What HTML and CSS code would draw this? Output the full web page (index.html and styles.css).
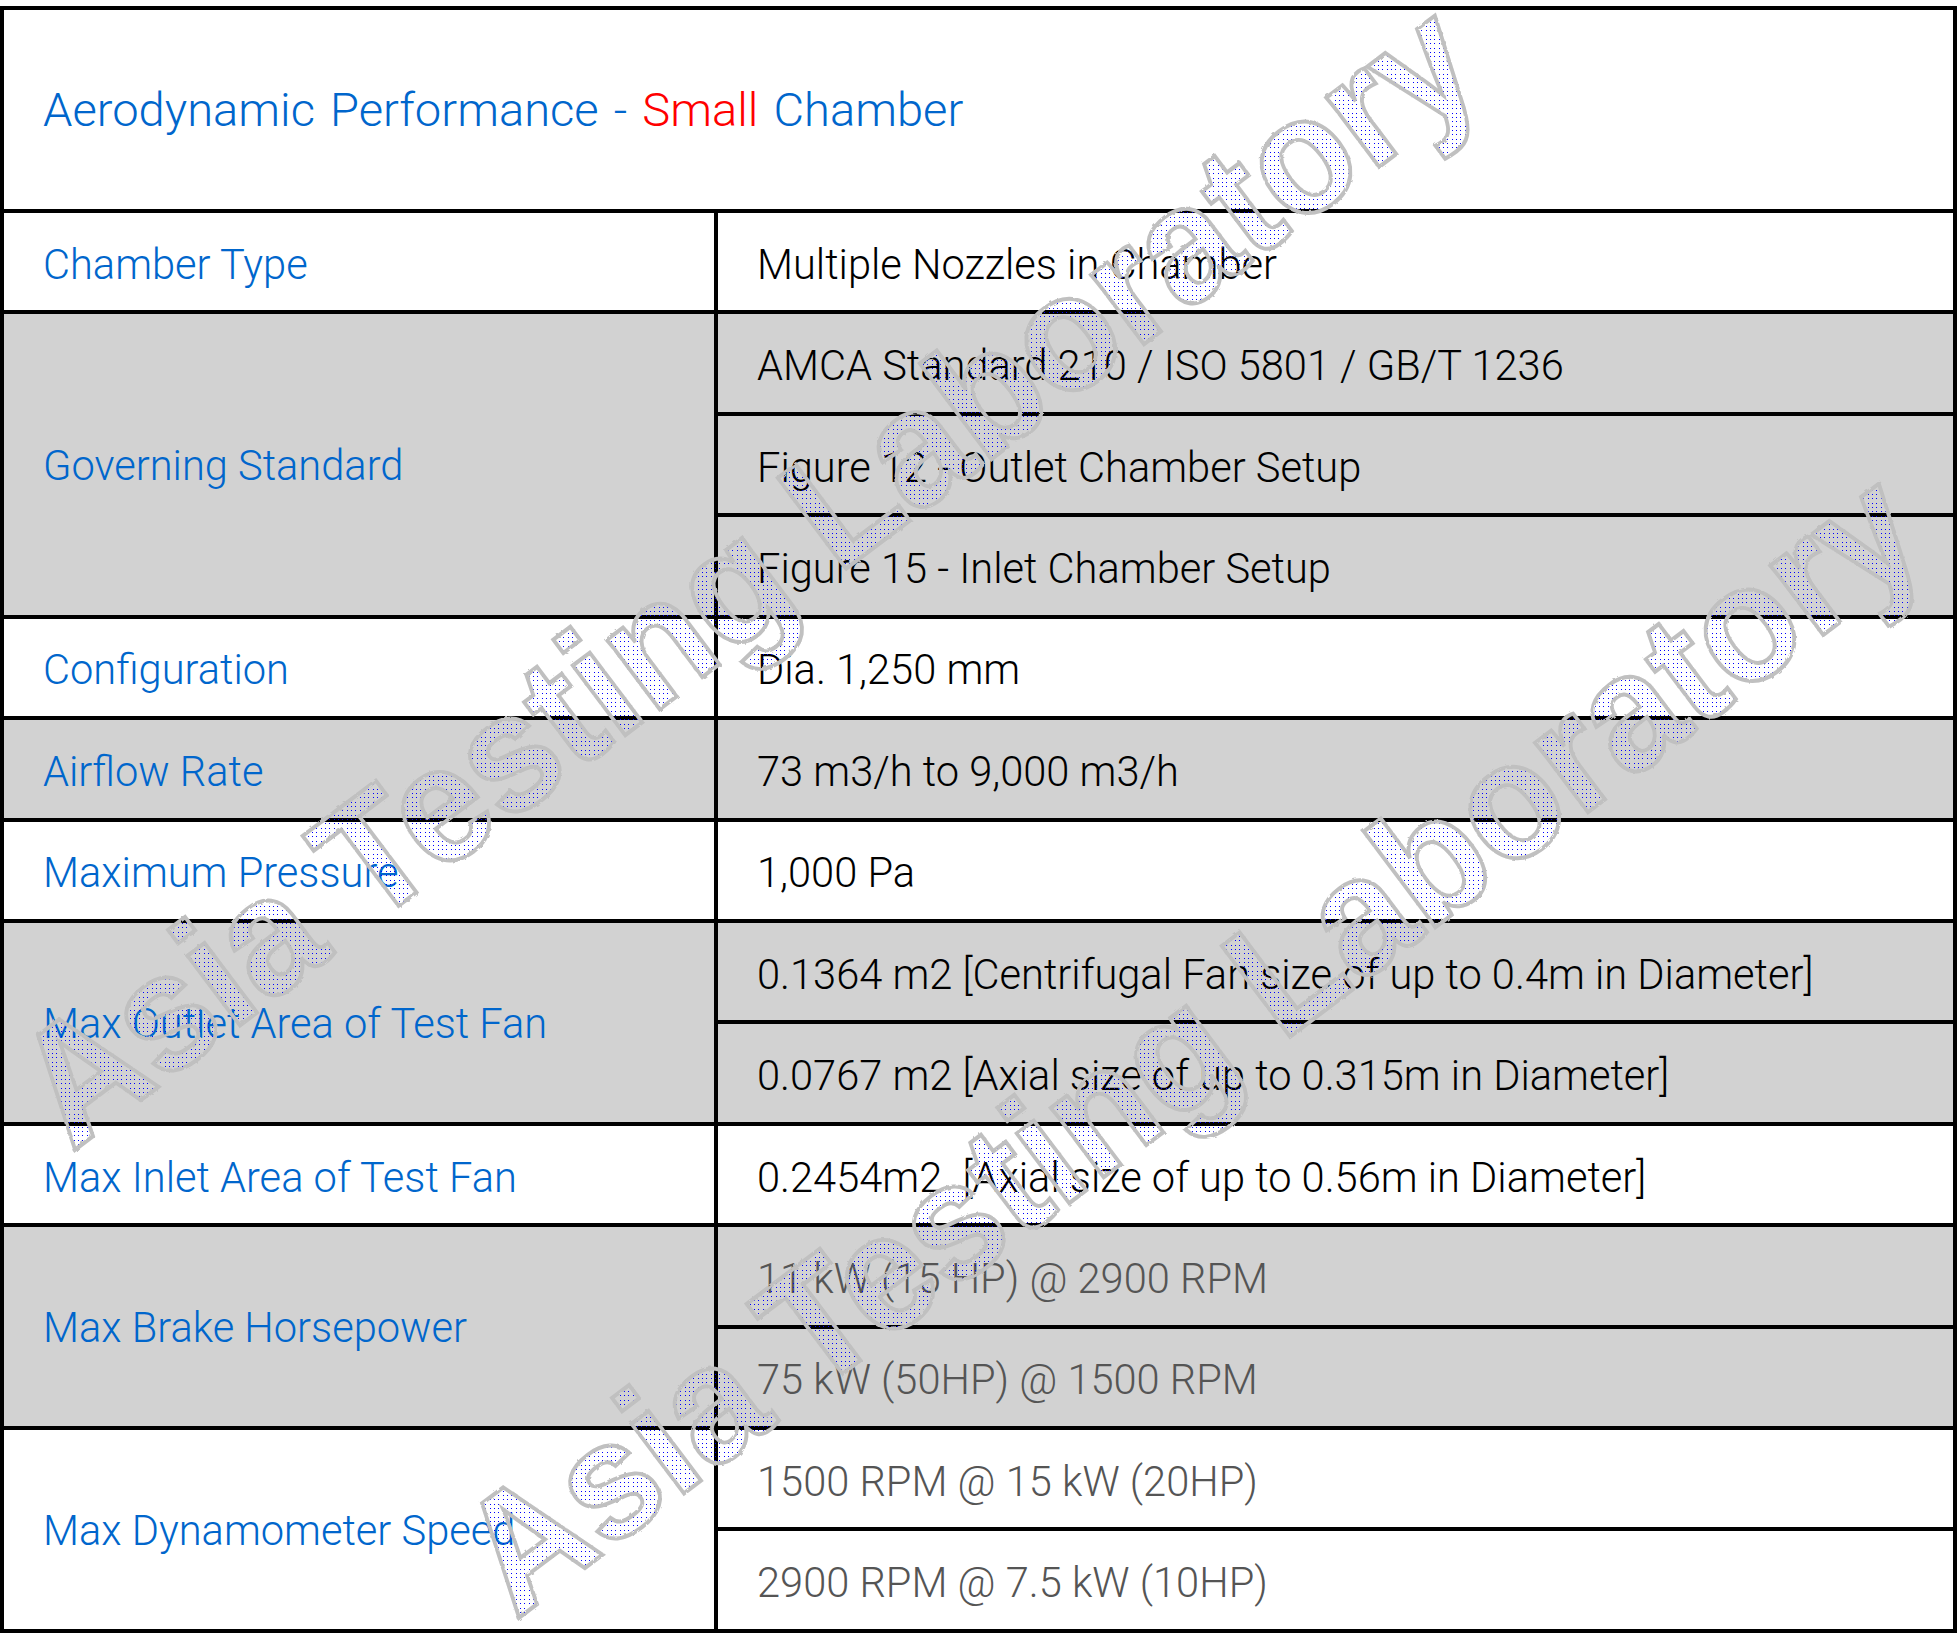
FILE: index.html
```html
<!DOCTYPE html>
<html lang="en">
<head>
<meta charset="utf-8">
<title>Aerodynamic Performance - Small Chamber</title>
<link rel="stylesheet" href="styles.css">
</head>
<body>
<main class="sheet">
  <div class="frame">
    <h1 class="title"><span>Aerodynamic Performance - <span class="red">Small</span> Chamber</span></h1>
    <div class="grid">
      <div class="label">Chamber Type</div>
      <div class="value">Multiple Nozzles in Chamber</div>

      <div class="label shade span3">Governing Standard</div>
      <div class="value shade">AMCA Standard 210 / ISO 5801 / GB/T 1236</div>
      <div class="value shade">Figure 12 - Outlet Chamber Setup</div>
      <div class="value shade">Figure 15 - Inlet Chamber Setup</div>

      <div class="label">Configuration</div>
      <div class="value">Dia. 1,250 mm</div>

      <div class="label shade">Airflow Rate</div>
      <div class="value shade">73 m3/h to 9,000 m3/h</div>

      <div class="label">Maximum Pressure</div>
      <div class="value">1,000 Pa</div>

      <div class="label shade span2">Max Outlet Area of Test Fan</div>
      <div class="value shade">0.1364 m2 [Centrifugal Fan size of up to 0.4m in Diameter]</div>
      <div class="value shade">0.0767 m2 [Axial size of up to 0.315m in Diameter]</div>

      <div class="label">Max Inlet Area of Test Fan</div>
      <div class="value">0.2454m2  [Axial size of up to 0.56m in Diameter]</div>

      <div class="label shade span2">Max Brake Horsepower</div>
      <div class="value shade dim">11 kW (15 HP) @ 2900 RPM</div>
      <div class="value shade dim">75 kW (50HP) @ 1500 RPM</div>

      <div class="label span2">Max Dynamometer Speed</div>
      <div class="value dim">1500 RPM @ 15 kW (20HP)</div>
      <div class="value dim">2900 RPM @ 7.5 kW (10HP)</div>
    </div>
  </div>
  <svg class="watermark" width="1957" height="1634" viewBox="0 0 1957 1634" aria-hidden="true">
    <defs>
      <pattern id="dots" width="13" height="13" patternUnits="userSpaceOnUse">
        <path d="M0 0h1v1h-1zM4 0h1v1h-1zM9 0h1v1h-1zM0 4h1v1h-1zM4 4h1v1h-1zM9 4h1v1h-1zM0 9h1v1h-1zM4 9h1v1h-1zM9 9h1v1h-1z" fill="#0000ff"/>
      </pattern>
      <filter id="rough" filterUnits="userSpaceOnUse" x="0" y="0" width="1957" height="1634">
        <feTurbulence type="fractalNoise" baseFrequency="0.25" numOctaves="1" seed="4" result="noise"/>
        <feDisplacementMap in="SourceGraphic" in2="noise" scale="3"/>
      </filter>
      <clipPath id="markclip">
        <use href="#mark1"/>
        <use href="#mark2"/>
      </clipPath>
    </defs>
    <rect class="dotfield" width="1957" height="1634" clip-path="url(#markclip)"/>
    <g class="outline">
      <text id="mark1" class="mark" transform="translate(72 1152) rotate(-37) scale(0.945 1)">Asia Testing Laboratory</text>
      <text id="mark2" class="mark" transform="translate(516 1620) rotate(-37) scale(0.945 1)">Asia Testing Laboratory</text>
    </g>
  </svg>
</main>
</body>
</html>
```
FILE: styles.css
```css
html, body {
  margin: 0;
  padding: 0;
  background: #fff;
}
body {
  font-family: Roboto, "Liberation Sans", sans-serif;
  font-weight: 300;
  color: #000;
}
.sheet {
  position: relative;
  width: 1957px;
  height: 1634px;
  overflow: hidden;
  padding-top: 6px;
  box-sizing: border-box;
}
.frame {
  border-top: 4px solid #000;
  border-left: 4px solid #000;
  border-right: 4px solid #000;
}
.title {
  margin: 0;
  height: 199px;
  border-bottom: 4px solid #000;
  padding-left: 39px;
  display: flex;
  align-items: center;
  font-size: 47.1px;
  font-weight: 300;
  word-spacing: 3.6px;
  color: #0066cc;
}
.title .red { color: #ff0000; }
.grid {
  display: grid;
  grid-template-columns: 710px 1fr;
  grid-auto-rows: 101.43px;
}
.label, .value {
  display: flex;
  align-items: center;
  box-sizing: border-box;
  padding-top: 5px;
  border-bottom: 4px solid #000;
  font-size: 41.6px;
  white-space: pre;
}
.label {
  grid-column: 1;
  padding-left: 39px;
  color: #0066cc;
}
.value {
  grid-column: 2;
  border-left: 4px solid #000;
  padding-left: 39px;
}
.shade { background: #d2d2d2; }
.dim { color: #555; }
.span2 { grid-row: span 2; padding-top: 2px; }
.span3 { grid-row: span 3; padding-top: 2px; }
.watermark {
  position: absolute;
  left: 0;
  top: 0;
  pointer-events: none;
}
.dotfield { fill: url(#dots); }
.outline {
  fill: none;
  stroke: #c0c0c0;
  stroke-width: 4px;
  filter: url(#rough);
}
.mark {
  font-family: "Liberation Sans", sans-serif;
  font-weight: 700;
  font-size: 165px;
}
```
